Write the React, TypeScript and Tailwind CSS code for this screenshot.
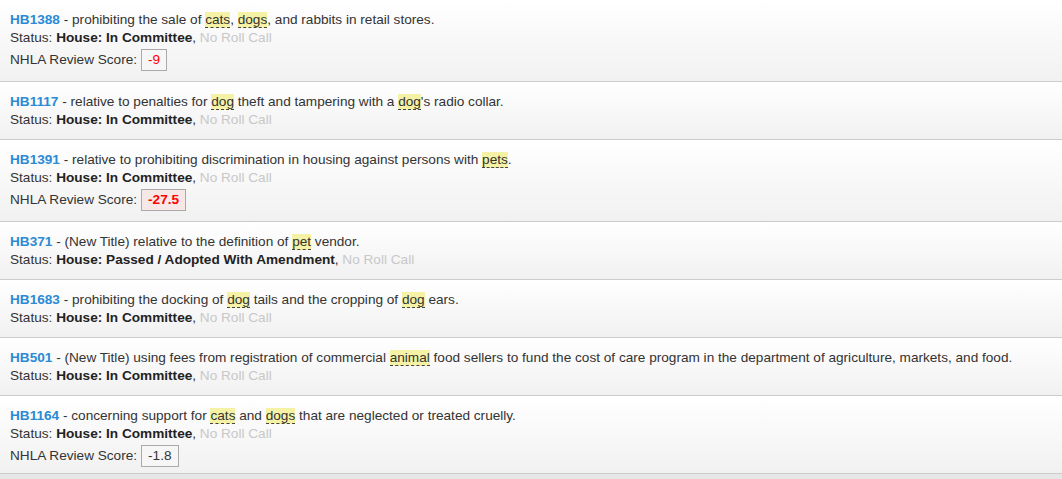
import React from "react";

type Bill = {
  id: string;
  parts: (string | { hl: string })[];
  status: string;
  score?: { value: string; tone: "red" | "strong" | "plain" };
};

const bills: Bill[] = [
  {
    id: "HB1388",
    parts: [" - prohibiting the sale of ", { hl: "cats" }, ", ", { hl: "dogs" }, ", and rabbits in retail stores."],
    status: "House: In Committee",
    score: { value: "-9", tone: "red" },
  },
  {
    id: "HB1117",
    parts: [" - relative to penalties for ", { hl: "dog" }, " theft and tampering with a ", { hl: "dog" }, "'s radio collar."],
    status: "House: In Committee",
  },
  {
    id: "HB1391",
    parts: [" - relative to prohibiting discrimination in housing against persons with ", { hl: "pets" }, "."],
    status: "House: In Committee",
    score: { value: "-27.5", tone: "strong" },
  },
  {
    id: "HB371",
    parts: [" - (New Title) relative to the definition of ", { hl: "pet" }, " vendor."],
    status: "House: Passed / Adopted With Amendment",
  },
  {
    id: "HB1683",
    parts: [" - prohibiting the docking of ", { hl: "dog" }, " tails and the cropping of ", { hl: "dog" }, " ears."],
    status: "House: In Committee",
  },
  {
    id: "HB501",
    parts: [
      " - (New Title) using fees from registration of commercial ",
      { hl: "animal" },
      " food sellers to fund the cost of care program in the department of agriculture, markets, and food.",
    ],
    status: "House: In Committee",
  },
  {
    id: "HB1164",
    parts: [" - concerning support for ", { hl: "cats" }, " and ", { hl: "dogs" }, " that are neglected or treated cruelly."],
    status: "House: In Committee",
    score: { value: "-1.8", tone: "plain" },
  },
];

function ScoreBox({ score }: { score: NonNullable<Bill["score"]> }) {
  const tone =
    score.tone === "strong"
      ? "bg-[#f7e8e8] text-[#ff0000] font-bold"
      : score.tone === "red"
      ? "bg-[#f6f6f6] text-[#ff0000]"
      : "bg-[#f6f6f6] text-[#333]";
  return (
    <span className={`ml-[4px] inline-flex h-[22px] items-center border border-[#aaa] px-[6px] ${tone}`}>
      {score.value}
    </span>
  );
}

function BillRow({ bill, last }: { bill: Bill; last: boolean }) {
  return (
    <div
      className={`border-b border-[#ccc] bg-gradient-to-b from-white to-[#f1f1f1] px-[10px] pt-[11px] ${
        last ? "pb-[6px]" : "pb-[10px]"
      }`}
    >
      <div className="h-[18px] whitespace-nowrap">
        <a className="font-bold text-[#2b8ad5]">{bill.id}</a>
        {bill.parts.map((p, i) =>
          typeof p === "string" ? (
            <span key={i}>{p}</span>
          ) : (
            <span key={i} className="border-b border-dashed border-[#444] bg-[#f5f2a6]">
              {p.hl}
            </span>
          )
        )}
      </div>
      <div className="h-[18px] whitespace-nowrap">
        Status: <b className="text-[#222]">{bill.status}</b>, <span className="text-[#c8c8c8]">No Roll Call</span>
      </div>
      {bill.score && (
        <div className="mt-[2px] flex h-[22px] items-center">
          NHLA Review Score:
          <ScoreBox score={bill.score} />
        </div>
      )}
    </div>
  );
}

export default function App() {
  return (
    <div className="min-h-[479px] bg-[#e6e6e6] font-['Liberation_Sans',Arial,sans-serif] text-[13.62px] leading-[18px] text-[#333]">
      {bills.map((b, i) => (
        <BillRow key={b.id} bill={b} last={i === bills.length - 1} />
      ))}
    </div>
  );
}
